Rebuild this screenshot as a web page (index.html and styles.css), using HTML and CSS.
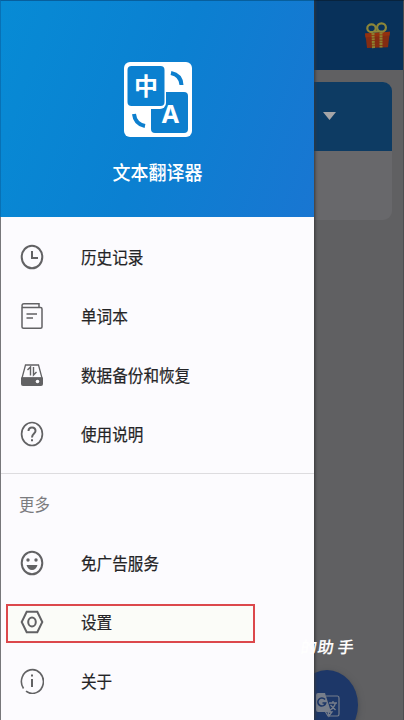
FILE: index.html
```html
<!DOCTYPE html>
<html lang="zh-CN">
<head>
<meta charset="utf-8">
<title>文本翻译器</title>
<link rel="stylesheet" href="styles.css">
</head>
<body>
<div class="screen">
  <main class="page">
    <header class="topbar">
      <svg class="gift" viewBox="0 0 27 30" preserveAspectRatio="none">
        <path d="M1 12L26 10L25 17L24 26L3 27L2 18Z" fill="#832c12"/>
        <path d="M1 12L26 10L25.500 14L1.500 16Z" fill="#93310f"/>
        <path d="M9 11.500L9.500 27M17 11L17 26.500" stroke="#8c8230" stroke-width="3" stroke-dasharray="2 .7"/>
        <g fill="none" stroke="#8c8639" stroke-width="2.200"><ellipse cx="7.500" cy="6.500" rx="4.200" ry="4"/><ellipse cx="17.500" cy="5.700" rx="4.400" ry="4.300"/><path d="M10 10L15 9.500"/></g>
      </svg>
    </header>
    <section class="card"><div class="card-head"><span class="caret"></span></div></section>
  </main>
  <div class="fab">
    <svg viewBox="0 0 24 26" preserveAspectRatio="none">
      <path d="M10 4H21.500Q23 4 23 6V22Q23 24 21.500 24H12L9 19" fill="none" stroke="#777e8b" stroke-width="1.200"/>
      <path d="M2 1H9L15 20H2Q0 20 0 18V3Q0 1 2 1Z" fill="#777e8b"/>
      <path d="M9 7.500A4 4 0 1 0 9.700 11H6.500" fill="none" stroke="#1d3768" stroke-width="1.600"/>
      <path d="M13 11H21M17 9V11M19.500 11Q18 16 14 18M14.500 13L19.500 18M12 20H16L13 24Z" fill="none" stroke="#777e8b" stroke-width="1.300"/>
    </svg>
  </div>
  <aside class="drawer">
    <div class="hero">
      <svg class="logo" viewBox="0 0 68 75">
        <rect width="68" height="75" rx="6" fill="#fff"/>
        <rect x="27" y="30" width="37" height="41" rx="4" fill="#0d7fce"/>
        <rect x="2" y="2" width="40" height="45" rx="6" fill="#fff"/>
        <rect x="3.500" y="4" width="37" height="40" rx="4" fill="#0b80d0"/>
        <path d="M47 11Q57 13 57.500 23" fill="none" stroke="#0d7fce" stroke-width="4"/>
        <path d="M10 52Q11 62 21 64" fill="none" stroke="#0d7fce" stroke-width="4"/>
        <text class="logo-cn" x="22" y="32.500" text-anchor="middle">中</text>
        <text class="logo-a" x="46.500" y="61" text-anchor="middle">A</text>
      </svg>
      <h1>文本翻译器</h1>
    </div>
    <nav class="menu">
      <a class="item"><svg viewBox="0 0 24 26"><ellipse cx="12" cy="13" rx="10.300" ry="11.300"/><path d="M12 7V14H18"/></svg><span>历史记录</span></a>
      <a class="item"><svg viewBox="0 0 24 26"><path d="M2 4V24Q2 25.200 3.500 25.200H20.500Q22 25.200 22 24V6Q22 4.500 20.500 4.500H3Q2 4.500 2 3Q2 .8 4 .8H19V4.500M6.500 11H17M6.500 15H13" stroke-width="1.500"/></svg><span>单词本</span></a>
      <a class="item"><svg viewBox="0 0 24 26"><path d="M5.500 3H18.500L22 16H2Z" stroke-width="1.300"/><path class="solid" d="M1 15.500H23V22Q23 24 21 24H3Q1 24 1 22Z"/><circle cx="17.500" cy="19.500" r="1.800" fill="#fcfbfe" stroke="none"/><path d="M7.500 8L10.500 5V13.500M13.500 5V13L16.500 10" stroke-width="1.400"/></svg><span>数据备份和恢复</span></a>
      <a class="item"><svg viewBox="0 0 24 26"><ellipse cx="12" cy="13" rx="10.400" ry="11.500" stroke-width="1.700"/><path d="M8.500 10Q8.500 6.500 12 6.500T15.500 10C15.500 12.500 12 12.500 12 16.500M12 18.300V20.300"/></svg><span>使用说明</span></a>
    </nav>
    <nav class="menu more">
      <h2>更多</h2>
      <a class="item"><svg viewBox="0 0 24 26"><ellipse cx="12" cy="13" rx="10.300" ry="11.300"/><path class="solid" d="M6.500 15H17.500Q16 20 12 20T6.500 15Z"/><g class="solid"><circle cx="8" cy="10" r="1.700"/><circle cx="16" cy="10" r="1.700"/></g></svg><span>免广告服务</span></a>
      <a class="item selected"><svg viewBox="0 0 24 26"><path d="M6.700 2.700H17.300L22.300 13L17.300 23.300H6.700L1.700 13Z"/><ellipse cx="12" cy="13" rx="3.800" ry="4.500"/></svg><span>设置</span></a>
      <a class="item"><svg viewBox="0 0 24 26"><path d="M6 23.200A11 11.900 0 1 0 3.500 20.500" stroke-width="1.600"/><path d="M12 11V19M12 6.500V8.500"/></svg><span>关于</span></a>
    </nav>
  </aside>
  <div class="watermark"><span>的</span>助手</div>
</div>
</body>
</html>
```
FILE: styles.css
```css
*, *::before { box-sizing: border-box; }
body { margin: 0; font-family: "Noto Sans CJK SC", "Noto Sans", sans-serif; }
.screen { position: relative; width: 404px; height: 720px; overflow: hidden; background: #606062; }
.page { height: 720px; border-top: 1px solid #08233d; border-right: 1px solid #4d4d4f; }
.topbar { height: 69px; display: flex; justify-content: flex-end; padding: 21px 12px 0 0; background: #08315a; }
.gift { width: 27px; height: 29px; }
.card { width: 78px; height: 138px; margin: 12px 0 0 314px; overflow: hidden; border-radius: 0 9px 9px 0; background: #68686b; }
.card-head { height: 69px; padding: 30px 0 0 9px; background: #0d3b63; }
.caret { display: block; width: 13px; height: 8px; background: #a5a5a7; clip-path: polygon(0 0, 100% 0, 50% 100%); }
.fab { position: absolute; left: 296px; top: 670px; width: 62px; height: 70px; border-radius: 50%; background: #1d3768; box-shadow: 0 2px 6px #484b50; }
.fab svg { display: block; width: 24px; height: 26px; margin: 22px 0 0 20px; }
.drawer { position: absolute; left: 0; top: 0; width: 314px; height: 720px; border-left: 1px solid #77777a; background: #fcfbfe; box-shadow: 1px 0 3px #353537; }
.hero { height: 217px; margin-left: -1px; padding-top: 61px; border-top: 1px solid #075f9d; border-left: 1px solid #0871b5; display: flex; flex-direction: column; align-items: center; background: linear-gradient(110deg, #078bd5, #0b80d1 50%, #1976d2); }
.logo { width: 68px; height: 75px; }
.logo-cn { font: 700 24px "Noto Sans CJK SC", sans-serif; fill: #fff; }
.logo-a { font: 700 25px "Noto Sans", sans-serif; fill: #fff; }
h1 { margin: 19px 0 0; font-size: 18px; line-height: 30px; font-weight: 500; color: #fff; transform: scaleY(1.1); }
.menu { padding-top: 10px; }
.item { height: 59px; display: flex; align-items: center; padding-left: 19px; position: relative; }
.item svg { width: 24px; height: 26px; fill: none; stroke: #626264; stroke-width: 2; }
.item svg .solid { fill: #626264; stroke: none; }
.item span { margin: 0 0 2px 37px; font-size: 15.6px; line-height: 24px; color: #242426; -webkit-text-stroke: .2px #242426; transform: scaleY(1.12); }
.more { margin-top: 10px; padding-top: 0; border-top: 1px solid #dddcdf; }
h2 { height: 59px; margin: 0; padding-left: 18px; font-size: 15.4px; line-height: 59px; font-weight: 400; color: #7b7b7e; transform: scaleY(1.1); }
.selected::before { content: ""; position: absolute; z-index: -1; left: 5px; top: 12px; width: 249px; height: 39px; border: 2px solid #dc484c; background: #fbfcf8; }
.selected { z-index: 0; }
.watermark { position: absolute; left: 301px; top: 634px; font-size: 16px; line-height: 24px; font-weight: 500; letter-spacing: 4px; color: #fff; transform: skewX(-8deg); -webkit-text-stroke: .2px #fff; }
.watermark span { letter-spacing: 1px; }
```
